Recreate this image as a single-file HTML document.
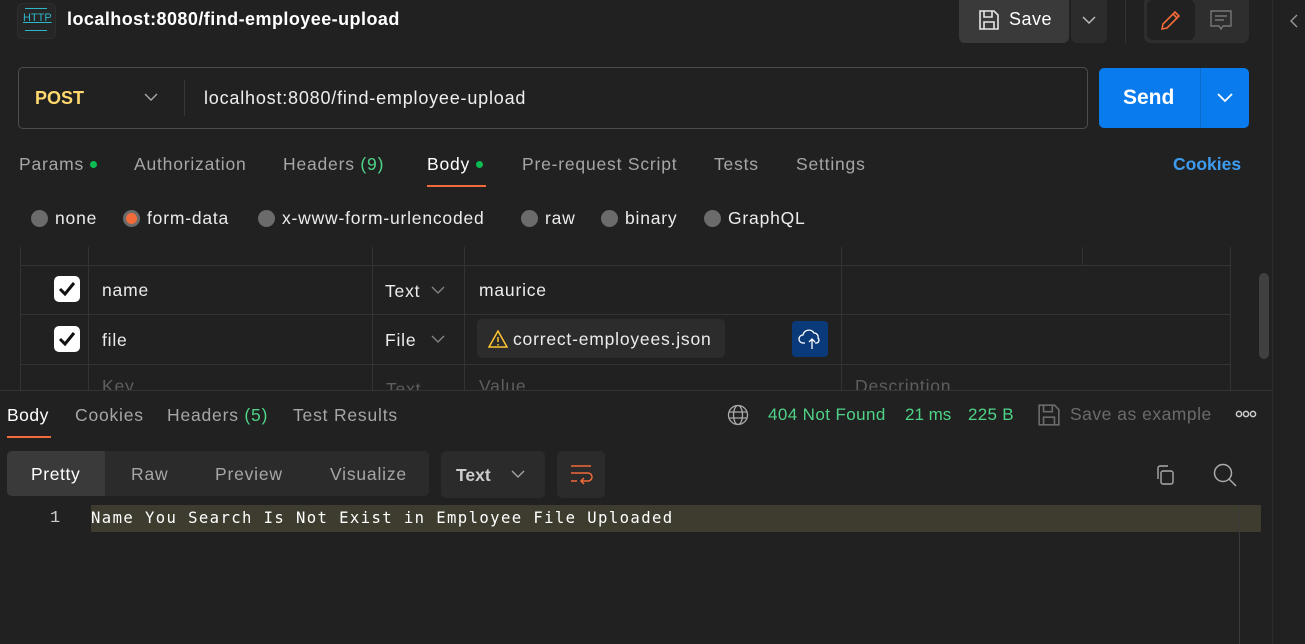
<!DOCTYPE html>
<html><head><meta charset="utf-8"><style>
*{margin:0;padding:0;box-sizing:border-box}
body{width:1305px;height:644px;background:#212121;font-family:"Liberation Sans",sans-serif;color:#e6e6e6;position:relative;overflow:hidden}
.a{position:absolute;white-space:nowrap}
.t{font-size:17.5px;color:#a6a6a6;letter-spacing:0.8px}
.dot{display:inline-block;width:7px;height:7px;border-radius:50%;background:#0cbb52;margin-left:6px;vertical-align:2px}
.rad{display:inline-block;width:17px;height:17px;border-radius:50%;background:#6b6b6b;vertical-align:-3px;margin-right:7px}
.hl{position:absolute;height:1px;background:#333}
.vl{position:absolute;width:1px;background:#333}
.cb{position:absolute;width:26px;height:26px;background:#fff;border-radius:5px}
.cell{font-size:17.5px;color:#ececec;letter-spacing:0.8px}
.ph{font-size:17.5px;color:#5e5e5e;letter-spacing:0.8px}
</style></head><body>
<!-- top bar -->
<div class="a" style="left:17px;top:3px;width:39px;height:36px;background:#262626;border-radius:6px;border:1px solid #2e2e2e"></div>
<div class="a" style="left:23px;top:12px;font-size:11px;color:#2fb5c9;text-decoration:underline">HTTP</div>
<div class="a" style="left:25px;top:8px;width:22px;height:1px;background:#2fb5c9"></div>
<div class="a" style="left:25px;top:30px;width:22px;height:1px;background:#2fb5c9"></div>
<div class="a" style="left:67px;top:9px;font-size:18px;font-weight:bold;color:#fff;letter-spacing:0.45px">localhost:8080/find-employee-upload</div>
<div class="a" style="left:959px;top:0;width:110px;height:43px;background:#3a3a3a;border-radius:0 0 6px 6px"></div>
<svg class="a" style="left:978px;top:9px" width="22" height="22" viewBox="0 0 22 22" fill="none" stroke="#e6e6e6" stroke-width="1.6"><path d="M2 2h14l4 4v14H2z"/><path d="M6 2v6h8V2M6 20v-7h10v7"/></svg>
<div class="a" style="left:1009px;top:9px;font-size:18px;color:#fff;letter-spacing:0.5px">Save</div>
<div class="a" style="left:1071px;top:0;width:36px;height:43px;background:#2c2c2c;border-radius:0 0 6px 6px"></div>
<svg class="a" style="left:1082px;top:15px" width="14" height="10"><path d="M1 2l6 6 6-6" stroke="#bbb" fill="none" stroke-width="1.5"/></svg>
<div class="vl" style="left:1125px;top:0;height:43px"></div>
<div class="a" style="left:1144px;top:0;width:105px;height:43px;background:#2e2e2e;border-radius:0 0 7px 7px"></div>
<div class="a" style="left:1147px;top:0;width:48px;height:40px;background:#212121;border-radius:6px"></div>
<svg class="a" style="left:1159px;top:8px" width="24" height="24" viewBox="0 0 24 24" fill="none" stroke="#f26b3a" stroke-width="1.6"><path d="M3 21l1-5L16 4l4 4L8 20z"/><path d="M14 6l4 4"/></svg>
<svg class="a" style="left:1209px;top:9px" width="24" height="22" viewBox="0 0 24 22" fill="none" stroke="#777" stroke-width="1.4"><path d="M2 2h20v15H14l-2 3-2-3H2z"/><path d="M6 7h12M6 11h9"/></svg>
<div class="vl" style="left:1272px;top:0;height:644px;background:#2c2c2c"></div>
<svg class="a" style="left:1290px;top:14px" width="8" height="14"><path d="M7 1L1 7l6 6" stroke="#999" fill="none" stroke-width="1.4"/></svg>
<!-- url bar -->
<div class="a" style="left:18px;top:67px;width:1070px;height:62px;border:1px solid #4d4d4d;border-radius:5px"></div>
<div class="a" style="left:35px;top:88px;font-size:18px;font-weight:bold;color:#ffd86e">POST</div>
<svg class="a" style="left:144px;top:93px" width="14" height="9"><path d="M1 1l6 6 6-6" stroke="#aaa" fill="none" stroke-width="1.4"/></svg>
<div class="vl" style="left:184px;top:80px;height:36px;background:#363636"></div>
<div class="a" style="left:204px;top:88px;font-size:18px;color:#eee;letter-spacing:0.8px">localhost:8080/find-employee-upload</div>
<div class="a" style="left:1099px;top:68px;width:150px;height:60px;background:#097bed;border-radius:5px"></div>
<div class="vl" style="left:1200px;top:68px;height:60px;background:#0a6bcc"></div>
<div class="a" style="left:1123px;top:86px;font-size:21px;font-weight:bold;color:#fff">Send</div>
<svg class="a" style="left:1217px;top:93px" width="16" height="10"><path d="M1 1l7 7 7-7" stroke="#fff" fill="none" stroke-width="1.8"/></svg>
<!-- tabs -->
<div class="a t" style="left:19px;top:154px">Params<span class="dot"></span></div>
<div class="a t" style="left:134px;top:154px">Authorization</div>
<div class="a t" style="left:283px;top:154px">Headers <span style="color:#4ed387">(9)</span></div>
<div class="a t" style="left:427px;top:154px;color:#fff">Body<span class="dot"></span></div>
<div class="a" style="left:427px;top:185px;width:59px;height:2px;background:#f26b3a"></div>
<div class="a t" style="left:522px;top:154px">Pre-request Script</div>
<div class="a t" style="left:714px;top:154px">Tests</div>
<div class="a t" style="left:796px;top:154px">Settings</div>
<div class="a" style="left:1173px;top:154px;font-size:17.5px;font-weight:bold;color:#3d9cf0">Cookies</div>
<!-- radios -->
<div class="a cell" style="left:31px;top:208px"><span class="rad"></span>none</div>
<div class="a cell" style="left:123px;top:208px"><span class="rad" style="background:#f26b3a;border:3px solid #6b6b6b"></span>form-data</div>
<div class="a cell" style="left:258px;top:208px"><span class="rad"></span>x-www-form-urlencoded</div>
<div class="a cell" style="left:521px;top:208px"><span class="rad"></span>raw</div>
<div class="a cell" style="left:601px;top:208px"><span class="rad"></span>binary</div>
<div class="a cell" style="left:704px;top:208px"><span class="rad"></span>GraphQL</div>
<!-- table -->
<div class="hl" style="left:20px;top:265px;width:1210px"></div>
<div class="hl" style="left:20px;top:314px;width:1210px"></div>
<div class="hl" style="left:20px;top:364px;width:1210px"></div>
<div class="vl" style="left:20px;top:247px;height:143px"></div>
<div class="vl" style="left:88px;top:247px;height:143px"></div>
<div class="vl" style="left:372px;top:247px;height:143px"></div>
<div class="vl" style="left:464px;top:247px;height:143px"></div>
<div class="vl" style="left:841px;top:247px;height:143px"></div>
<div class="vl" style="left:1082px;top:247px;height:18px"></div>
<div class="vl" style="left:1230px;top:247px;height:143px"></div>
<div class="a" style="left:1259px;top:273px;width:10px;height:86px;background:#404040;border-radius:5px"></div>
<div class="cb" style="left:54px;top:276px"></div>
<svg class="a" style="left:57px;top:280px" width="20" height="18"><path d="M3 9l5 5 9-11" stroke="#111" fill="none" stroke-width="3"/></svg>
<div class="cb" style="left:54px;top:326px"></div>
<svg class="a" style="left:57px;top:330px" width="20" height="18"><path d="M3 9l5 5 9-11" stroke="#111" fill="none" stroke-width="3"/></svg>
<div class="a cell" style="left:102px;top:280px">name</div>
<div class="a cell" style="left:385px;top:281px">Text</div>
<svg class="a" style="left:431px;top:286px" width="14" height="9"><path d="M1 1l6 6 6-6" stroke="#888" fill="none" stroke-width="1.3"/></svg>
<div class="a cell" style="left:479px;top:280px">maurice</div>
<div class="a cell" style="left:102px;top:330px">file</div>
<div class="a cell" style="left:385px;top:330px">File</div>
<svg class="a" style="left:431px;top:335px" width="14" height="9"><path d="M1 1l6 6 6-6" stroke="#888" fill="none" stroke-width="1.3"/></svg>
<div class="a" style="left:477px;top:319px;width:248px;height:39px;background:#2c2c2c;border-radius:5px"></div>
<svg class="a" style="left:488px;top:330px" width="20" height="18"><path d="M10 1L19 17H1z" stroke="#ffc533" fill="none" stroke-width="1.5"/><path d="M10 7v5M10 14v1.5" stroke="#ffc533" stroke-width="1.5"/></svg>
<div class="a cell" style="left:513px;top:329px">correct-employees.json</div>
<div class="a" style="left:792px;top:321px;width:36px;height:36px;background:#0b3a7a;border-radius:4px"></div>
<svg class="a" style="left:797px;top:325px" width="26" height="28" viewBox="0 0 26 28" fill="none" stroke="#fff" stroke-width="1.3"><path d="M8 18H6a4 4 0 010-8 6 6 0 0111-2 4 4 0 014 5 3 3 0 01-1 5h-2"/><path d="M15 24V14M12 17l3-3 3 3"/></svg>
<div class="a ph" style="left:102px;top:376px">Key</div>
<div class="a ph" style="left:386px;top:379px">Text</div>
<div class="a ph" style="left:479px;top:376px">Value</div>
<div class="a ph" style="left:855px;top:376px">Description</div>
<!-- response -->
<div class="a" style="left:0;top:390px;width:1272px;height:254px;background:#212121;border-top:1px solid #333"></div>
<div class="a" style="left:7px;top:405px;font-size:17.5px;color:#fff;letter-spacing:0.5px">Body</div>
<div class="a" style="left:7px;top:436px;width:44px;height:2px;background:#f26b3a"></div>
<div class="a t" style="left:75px;top:405px">Cookies</div>
<div class="a t" style="left:167px;top:405px">Headers <span style="color:#4ed387">(5)</span></div>
<div class="a t" style="left:293px;top:405px">Test Results</div>
<svg class="a" style="left:727px;top:404px" width="22" height="22" viewBox="0 0 22 22" fill="none" stroke="#aaa" stroke-width="1.3"><circle cx="11" cy="11" r="9.5"/><ellipse cx="11" cy="11" rx="4.5" ry="9.5"/><path d="M2 8h18M2 14h18"/></svg>
<div class="a" style="left:768px;top:405px;font-size:17px;color:#4ed387;letter-spacing:0.4px">404 Not Found</div>
<div class="a" style="left:905px;top:405px;font-size:17px;color:#4ed387">21 ms</div>
<div class="a" style="left:968px;top:405px;font-size:17px;color:#4ed387;letter-spacing:0.3px">225 B</div>
<svg class="a" style="left:1037px;top:403px" width="24" height="24" viewBox="0 0 22 22" fill="none" stroke="#6b6b6b" stroke-width="1.5"><path d="M2 2h14l4 4v14H2z"/><path d="M6 2v6h8V2M6 20v-7h10v7"/></svg>
<div class="a" style="left:1070px;top:404px;font-size:17.5px;color:#6b6b6b;letter-spacing:0.5px">Save as example</div>
<svg class="a" style="left:1235px;top:410px" width="22" height="8"><circle cx="4" cy="4" r="2.6" stroke="#ccc" stroke-width="1.5" fill="none"/><circle cx="11" cy="4" r="2.6" stroke="#ccc" stroke-width="1.5" fill="none"/><circle cx="18" cy="4" r="2.6" stroke="#ccc" stroke-width="1.5" fill="none"/></svg>
<div class="a" style="left:7px;top:451px;width:422px;height:45px;background:#2b2b2b;border-radius:5px"></div>
<div class="a" style="left:7px;top:451px;width:98px;height:45px;background:#3a3a3a;border-radius:5px 0 0 5px"></div>
<div class="a" style="left:31px;top:464px;font-size:17.5px;color:#fff;letter-spacing:0.6px">Pretty</div>
<div class="a t" style="left:131px;top:464px">Raw</div>
<div class="a t" style="left:215px;top:464px">Preview</div>
<div class="a t" style="left:330px;top:464px">Visualize</div>
<div class="a" style="left:441px;top:451px;width:104px;height:47px;background:#2b2b2b;border-radius:5px"></div>
<div class="a" style="left:456px;top:465px;font-size:17.5px;font-weight:bold;color:#ccc">Text</div>
<svg class="a" style="left:511px;top:470px" width="14" height="9"><path d="M1 1l6 6 6-6" stroke="#aaa" fill="none" stroke-width="1.3"/></svg>
<div class="a" style="left:557px;top:451px;width:48px;height:47px;background:#2b2b2b;border-radius:5px"></div>
<svg class="a" style="left:569px;top:463px" width="24" height="22" viewBox="0 0 24 22" fill="none" stroke="#f26b3a" stroke-width="1.5"><path d="M2 3h20M2 10h17a4 4 0 010 8h-6M15 15l-3 3 3 3M2 18h6"/></svg>
<svg class="a" style="left:1153px;top:463px" width="24" height="24" viewBox="0 0 24 24" fill="none" stroke="#aaa" stroke-width="1.4"><rect x="8" y="8" width="12" height="13" rx="2"/><path d="M5 16V5a2 2 0 012-2h8"/></svg>
<svg class="a" style="left:1212px;top:462px" width="26" height="26" viewBox="0 0 26 26" fill="none" stroke="#aaa" stroke-width="1.5"><circle cx="11" cy="11" r="8.5"/><path d="M17 17l7 7"/></svg>
<div class="a" style="left:91px;top:505px;width:1170px;height:27px;background:#3d3c2f"></div>
<div class="vl" style="left:1239px;top:505px;height:139px;background:#3a3a3a"></div>
<div class="a" style="left:50px;top:509px;font-family:'Liberation Mono',monospace;font-size:17px;color:#ccc">1</div>
<div class="a" style="left:91px;top:509px;font-family:'DejaVu Sans Mono','Liberation Mono',monospace;font-size:15.6px;color:#fff;letter-spacing:1.4px">Name You Search Is Not Exist in Employee File Uploaded</div>
</body></html>
